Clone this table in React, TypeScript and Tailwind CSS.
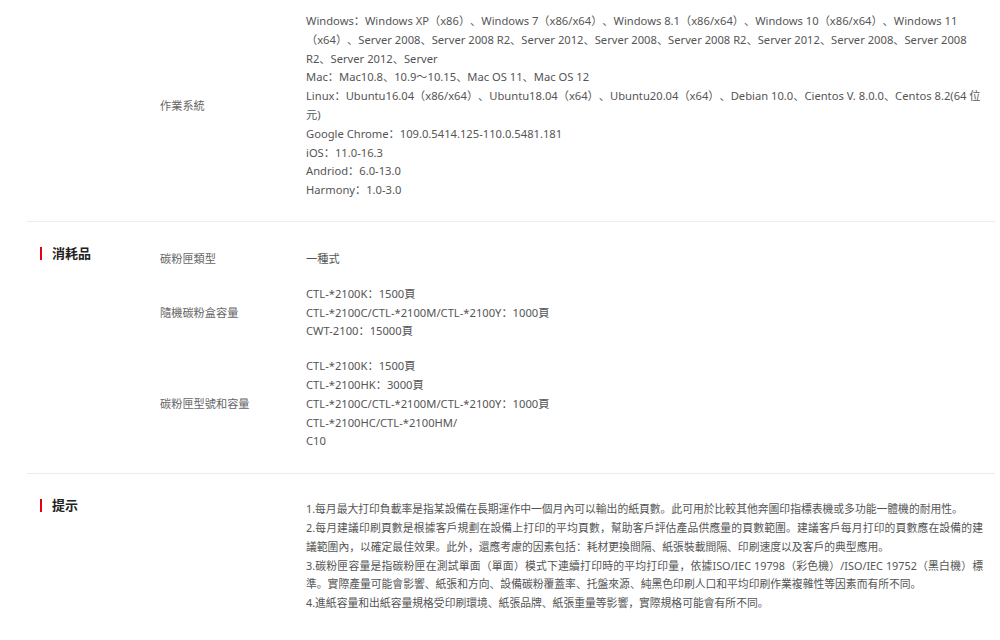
import React from 'react';

interface SpecRow {
  label: string;
  lines: string[];
}

const osLines = [
  'Windows：Windows XP（x86）、Windows 7（x86/x64）、Windows 8.1（x86/x64）、Windows 10（x86/x64）、Windows 11（x64）、Server 2008、Server 2008 R2、Server 2012、Server 2008、Server 2008 R2、Server 2012、Server 2008、Server 2008 R2、Server 2012、Server',
  'Mac：Mac10.8、10.9～10.15、Mac OS 11、Mac OS 12',
  'Linux：Ubuntu16.04（x86/x64）、Ubuntu18.04（x64）、Ubuntu20.04（x64）、Debian 10.0、Cientos V. 8.0.0、Centos 8.2(64 位元)',
  'Google Chrome：109.0.5414.125-110.0.5481.181',
  'iOS：11.0-16.3',
  'Andriod：6.0-13.0',
  'Harmony：1.0-3.0',
];

const consumables: SpecRow[] = [
  { label: '碳粉匣類型', lines: ['一種式'] },
  {
    label: '隨機碳粉盒容量',
    lines: [
      'CTL-*2100K：1500頁',
      'CTL-*2100C/CTL-*2100M/CTL-*2100Y：1000頁',
      'CWT-2100：15000頁',
    ],
  },
  {
    label: '碳粉匣型號和容量',
    lines: [
      'CTL-*2100K：1500頁',
      'CTL-*2100HK：3000頁',
      'CTL-*2100C/CTL-*2100M/CTL-*2100Y：1000頁',
      'CTL-*2100HC/CTL-*2100HM/',
      'C10',
    ],
  },
];

const notes = [
  '1.每月最大打印負載率是指某設備在長期運作中一個月內可以輸出的紙頁數。此可用於比較其他奔圖印指標表機或多功能一體機的耐用性。',
  '2.每月建議印刷頁數是根據客戶規劃在設備上打印的平均頁數，幫助客戶評估產品供應量的頁數範圍。建議客戶每月打印的頁數應在設備的建議範圍內，以確定最佳效果。此外，還應考慮的因素包括：耗材更換間隔、紙張裝載間隔、印刷速度以及客戶的典型應用。',
  '3.碳粉匣容量是指碳粉匣在測試單面（單面）模式下連續打印時的平均打印量，依據ISO/IEC 19798（彩色機）/ISO/IEC 19752（黑白機）標準。實際產量可能會影響、紙張和方向、設備碳粉覆蓋率、托盤來源、純黑色印刷人口和平均印刷作業複雜性等因素而有所不同。',
  '4.進紙容量和出紙容量規格受印刷環境、紙張品牌、紙張重量等影響，實際規格可能會有所不同。',
];

function SectionTitle({ title }: { title?: string }) {
  return (
    <div className="w-[133px] shrink-0 pl-[13px] pt-[22px]">
      {title && (
        <div className="flex items-center text-[13px] leading-[19px] font-bold text-[#222]">
          <span className="w-[2px] h-[13px] bg-[#e60012] mr-[10px]"></span>
          {title}
        </div>
      )}
    </div>
  );
}

export default function App() {
  return (
    <main
      className="bg-white min-h-screen pl-[27px] pr-[5px] text-[11.2px] leading-[18.8px] [text-spacing-trim:space-all]"
      style={{ fontFamily: '"Noto Sans", "Noto Sans CJK SC", sans-serif' }}
    >
      {/* 作業系統 */}
      <section className="flex border-b border-[#ececec]">
        <SectionTitle />
        <div className="flex-1 flex items-center pt-[12px] pb-[21px]">
          <div className="w-[146px] shrink-0 text-[#666]">作業系統</div>
          <div className="flex-1 pr-[12px] text-[#555]">
            {osLines.map((line, i) => (
              <p key={i}>{line}</p>
            ))}
          </div>
        </div>
      </section>

      {/* 消耗品 */}
      <section className="flex border-b border-[#ececec]">
        <SectionTitle title="消耗品" />
        <div className="flex-1 flex flex-col gap-[16px] pt-[28px] pb-[22px]">
          {consumables.map((row) => (
            <div key={row.label} className="flex items-center">
              <div className="w-[146px] shrink-0 text-[#666]">{row.label}</div>
              <div className="flex-1 pr-[12px] text-[#555]">
                {row.lines.map((line, i) => (
                  <p key={i}>{line}</p>
                ))}
              </div>
            </div>
          ))}
        </div>
      </section>

      {/* 提示 */}
      <section className="flex">
        <SectionTitle title="提示" />
        <div className="flex-1 pt-[26px] pb-[27px] pl-[146px] pr-[12px] text-[10.8px] text-[#555] text-justify">
          {notes.map((note, i) => (
            <p key={i}>{note}</p>
          ))}
        </div>
      </section>
    </main>
  );
}
